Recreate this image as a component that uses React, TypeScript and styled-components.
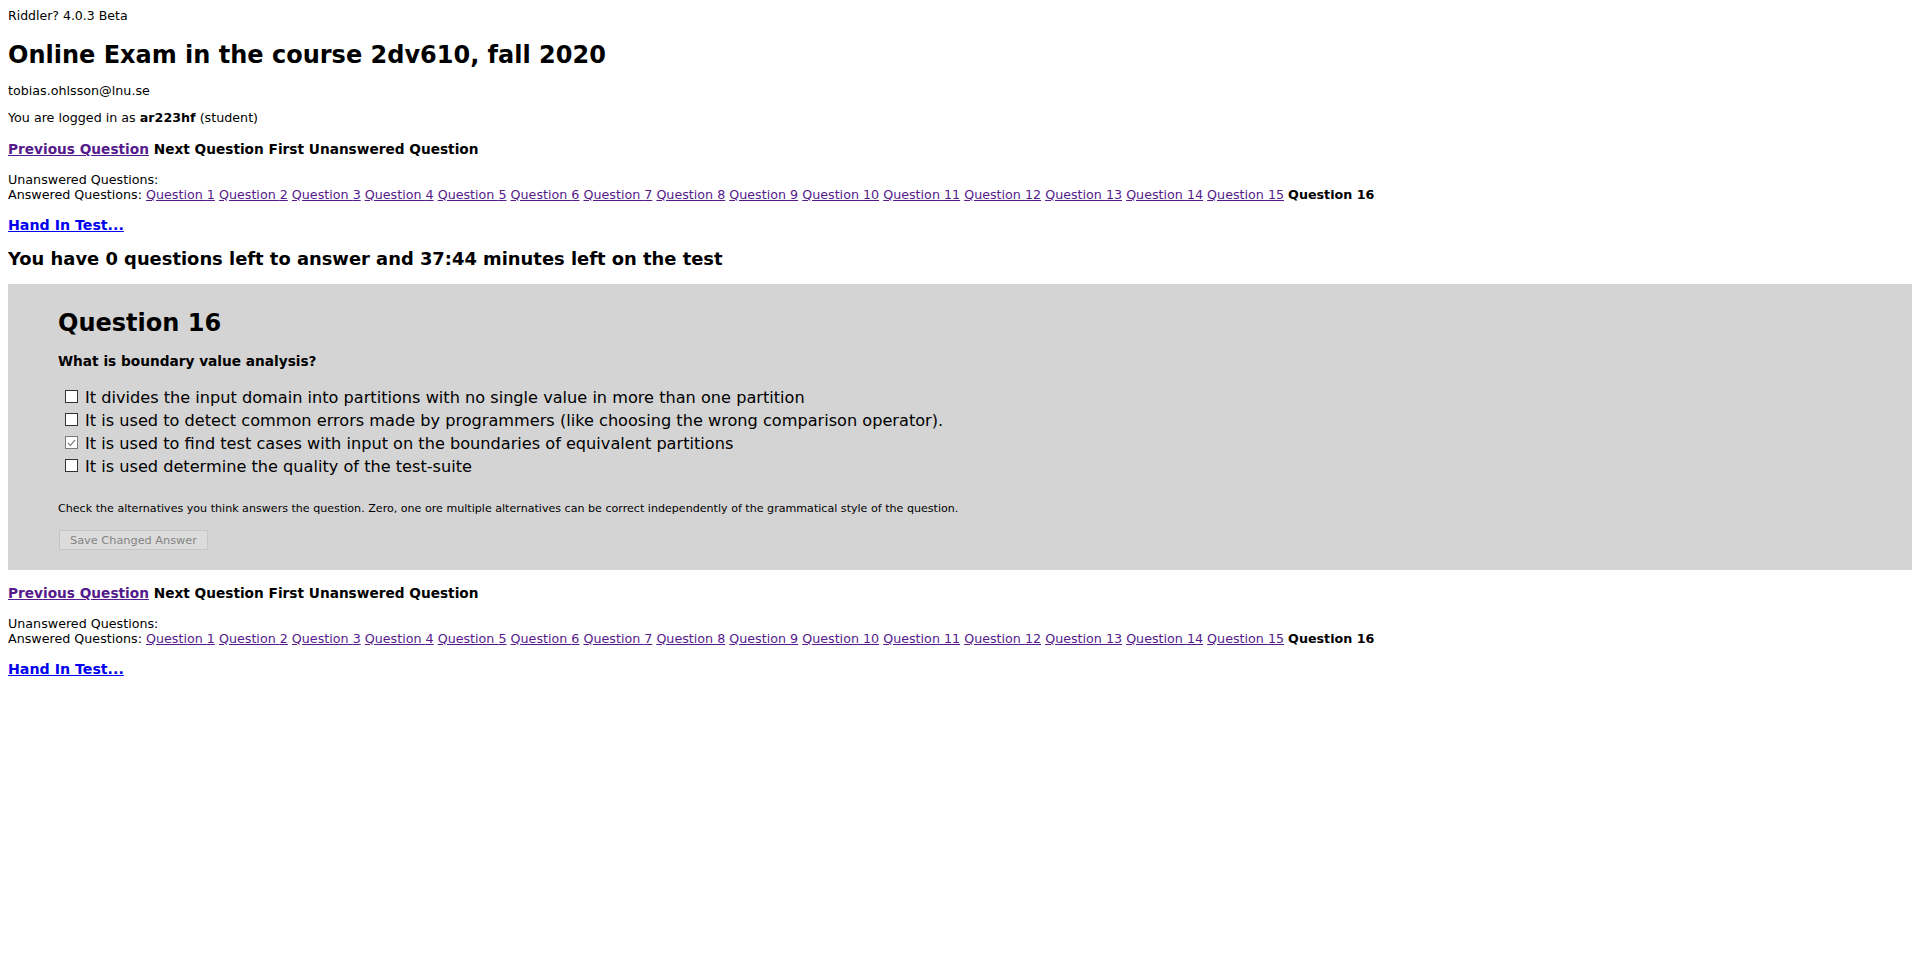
import React, { FC } from 'react'
import styled, { createGlobalStyle } from 'styled-components'

/////////STYLED/////////
const GlobalStyle = createGlobalStyle`
	body {
		margin: 8px;
		background: #fff;
		color: #000;
		font-family: 'DejaVu Sans', Verdana, Tahoma, sans-serif;
		font-size: 12.7px;
	}
`
const Version = styled.div`
	font-size: 12.5px;
	line-height: 16px;
`
const Title = styled.h1`
	margin: 17px 0 0;
	font-size: 24px;
	line-height: 28px;
	font-weight: bold;
`
const Line = styled.p<{ $top: number }>`
	margin: ${(p) => p.$top}px 0 0;
	font-size: 12.7px;
	line-height: 16px;
`
const NavRow = styled.div`
	margin-top: 14px;
	font-size: 13.7px;
	line-height: 18px;
	font-weight: bold;
`
const QuestionLinks = styled.div`
	margin-top: 14px;
	font-size: 12.7px;
	line-height: 15px;
`
const Link = styled.a<{ $fresh?: boolean }>`
	color: ${(p) => (p.$fresh ? '#0000ee' : '#551a8b')};
	text-decoration: underline;
	cursor: pointer;
`
const HandIn = styled.div`
	margin-top: 14px;
	font-size: 14.2px;
	line-height: 18px;
	font-weight: bold;
`
const Status = styled.h2`
	margin: 14px 0 0;
	font-size: 17.9px;
	line-height: 22px;
	font-weight: bold;
`
const QuestionBox = styled.div`
	margin-top: 14px;
	background: #d4d4d4;
	padding: 25px 50px 20px;
`
const QuestionTitle = styled.h2`
	margin: 0;
	font-size: 24px;
	line-height: 28px;
	font-weight: bold;
`
const QuestionText = styled.p`
	margin: 16px 0 0;
	font-size: 13.7px;
	line-height: 17px;
	font-weight: bold;
`
const Alternatives = styled.div`
	margin-top: 16px;
	padding-left: 7px;
	display: flex;
	flex-direction: column;
`
const Alternative = styled.label`
	display: flex;
	align-items: center;
	gap: 7px;
	font-size: 16.15px;
	line-height: 23px;
	cursor: pointer;
`
const Box = styled.span<{ $checked: boolean }>`
	display: inline-flex;
	align-items: center;
	justify-content: center;
	width: 13px;
	height: 13px;
	box-sizing: border-box;
	border: 1px solid ${(p) => (p.$checked ? '#7a7a7a' : '#333')};
	background: #fff;
	margin-top: -2px;
`
const Hint = styled.p`
	margin: 24px 0 0;
	font-size: 11.1px;
	line-height: 13px;
`
const SaveButton = styled.button`
	margin: 15px 0 0 1px;
	height: 20px;
	width: 149px;
	padding: 0;
	font-family: inherit;
	font-size: 11.3px;
	color: #838383;
	background: #dcdcdc;
	border: 1px solid #c6c6c6;
	border-radius: 0;
`
/////////STYLED/////////

const alternatives = [
	{ text: 'It divides the input domain into partitions with no single value in more than one partition', checked: false },
	{ text: 'It is used to detect common errors made by programmers (like choosing the wrong comparison operator).', checked: false },
	{ text: 'It is used to find test cases with input on the boundaries of equivalent partitions', checked: true },
	{ text: 'It is used determine the quality of the test-suite', checked: false },
]

const Navigation: FC = () => (
	<>
		<NavRow>
			<Link>Previous Question</Link> Next Question First Unanswered Question
		</NavRow>
		<QuestionLinks>
			<div>Unanswered Questions:</div>
			<div>
				Answered Questions:{' '}
				{Array.from({ length: 15 }, (_v, i) => (
					<React.Fragment key={i}>
						<Link>Question {i + 1}</Link>{' '}
					</React.Fragment>
				))}
				<b>Question 16</b>
			</div>
		</QuestionLinks>
		<HandIn>
			<Link $fresh>Hand In Test...</Link>
		</HandIn>
	</>
)

const App: FC = () => {
	return (
		<>
			<GlobalStyle />
			<Version>Riddler? 4.0.3 Beta</Version>
			<Title>Online Exam in the course 2dv610, fall 2020</Title>
			<Line $top={14}>tobias.ohlsson@lnu.se</Line>
			<Line $top={11}>
				You are logged in as <b>ar223hf</b> (student)
			</Line>
			<Navigation />
			<Status>You have 0 questions left to answer and 37:44 minutes left on the test</Status>
			<QuestionBox>
				<QuestionTitle>Question 16</QuestionTitle>
				<QuestionText>What is boundary value analysis?</QuestionText>
				<Alternatives>
					{alternatives.map((alt, key) => (
						<Alternative key={key}>
							<Box $checked={alt.checked}>
								{alt.checked && (
									<svg width="9" height="8" viewBox="0 0 9 8">
										<path d="M1 4.2 L3.3 6.5 L8 1.2" fill="none" stroke="#6e6e6e" strokeWidth="1.1" />
									</svg>
								)}
							</Box>
							{alt.text}
						</Alternative>
					))}
				</Alternatives>
				<Hint>
					Check the alternatives you think answers the question. Zero, one ore multiple alternatives can be
					correct independently of the grammatical style of the question.
				</Hint>
				<SaveButton disabled>Save Changed Answer</SaveButton>
			</QuestionBox>
			<Navigation />
		</>
	)
}

export default App
